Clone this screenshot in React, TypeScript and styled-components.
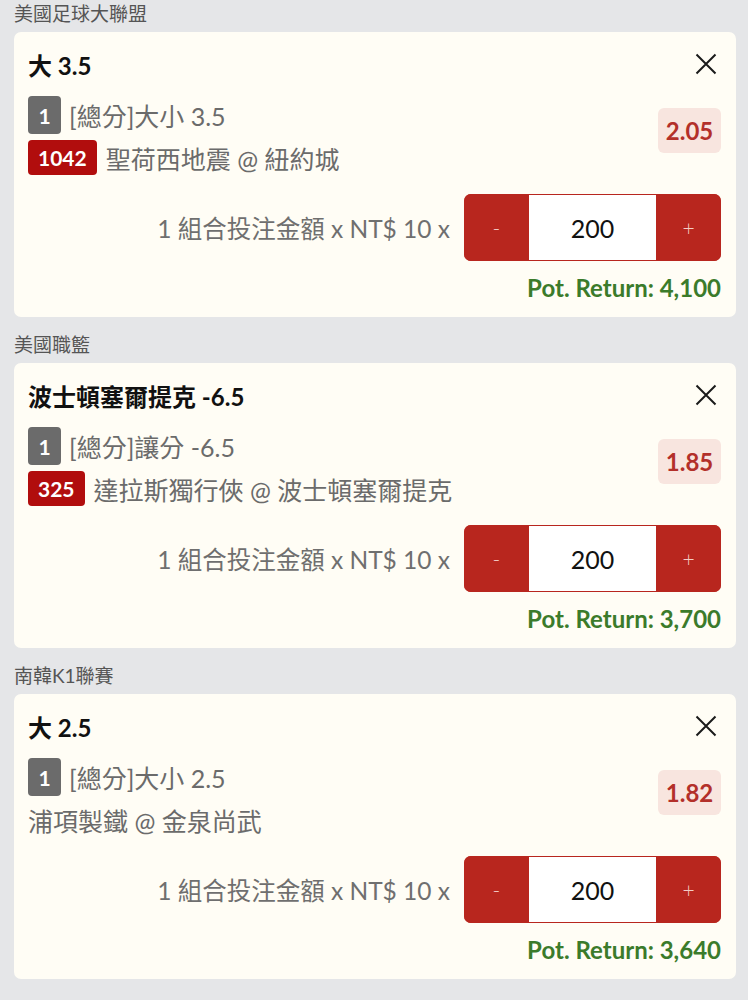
import styled, { createGlobalStyle } from 'styled-components';

const GlobalStyle = createGlobalStyle`
  html, body {
    margin: 0;
    padding: 0;
    background: #e5e6e8;
  }
  body {
    font-family: Lato, "Noto Sans CJK TC", sans-serif;
  }
`

const Page = styled.div`
  width: 748px;
  padding: 0 12px 0 14px;
  box-sizing: border-box;
`

const Section = styled.section`
  margin-bottom: 14px;
`

const League = styled.div`
  font-size: 19px;
  line-height: 28px;
  color: #555555;
  margin-bottom: 4px;
`

const Card = styled.div`
  background: #fffdf5;
  border-radius: 7px;
  height: 285px;
  box-sizing: border-box;
  padding: 16px 15px 14px 14px;
  display: flex;
  flex-direction: column;
`

const TitleRow = styled.div`
  display: flex;
  align-items: center;
  justify-content: space-between;
  height: 32px;
`

const Title = styled.div`
  font-size: 24px;
  font-weight: 700;
  color: #111111;
`

const CloseBtn = styled.button`
  background: none;
  border: none;
  padding: 0;
  margin-right: 4px;
  width: 22px;
  height: 22px;
  display: flex;
  align-items: center;
  justify-content: center;
  cursor: pointer;
`

const InfoRow = styled.div`
  display: flex;
  align-items: flex-start;
  justify-content: space-between;
  margin-top: 16px;
`

const Lines = styled.div`
  display: flex;
  flex-direction: column;
  gap: 6px;
`

const Line = styled.div<{ $h: number }>`
  display: flex;
  align-items: center;
  gap: 8px;
  height: ${({ $h }) => $h}px;
  font-size: 25px;
  color: #6b6b6b;
`

const Badge = styled.span<{ $red?: boolean }>`
  display: inline-flex;
  align-items: center;
  justify-content: center;
  box-sizing: border-box;
  min-width: ${({ $red }) => ($red ? '0' : '33px')};
  height: 100%;
  padding: 0 ${({ $red }) => ($red ? '10px' : '0')};
  margin-right: ${({ $red }) => ($red ? '1px' : '0')};
  border-radius: 4px;
  background: ${({ $red }) => ($red ? '#b10d0d' : '#6b6b6b')};
  color: #ffffff;
  font-size: 21px;
  font-weight: 700;
`

const Odds = styled.div`
  margin-top: 12px;
  width: 63px;
  height: 45px;
  border-radius: 6px;
  background: #f8e5df;
  color: #b3302a;
  font-size: 24px;
  font-weight: 700;
  display: flex;
  align-items: center;
  justify-content: center;
`

const StakeRow = styled.div`
  margin-top: auto;
  display: flex;
  align-items: center;
  justify-content: flex-end;
  gap: 14px;
`

const StakeLabel = styled.div`
  font-size: 24.5px;
  color: #6f6f6f;
`

const Stepper = styled.div`
  display: flex;
  width: 257px;
  height: 67px;
  border-radius: 7px;
  overflow: hidden;
  background: #b8261e;
`

const StepBtn = styled.button`
  width: 65px;
  border: none;
  background: #b8261e;
  color: rgba(255, 235, 230, 0.85);
  font-family: Lato, sans-serif;
  font-size: 21px;
  font-weight: 300;
  padding: 0;
`

const Amount = styled.div`
  flex: 1;
  margin: 1px 0;
  background: #ffffff;
  color: #111111;
  font-size: 25px;
  display: flex;
  align-items: center;
  justify-content: center;
`

const PotReturn = styled.div`
  margin-top: 12px;
  text-align: right;
  font-size: 24px;
  line-height: 30px;
  font-weight: 700;
  color: #3b7b2b;
`

type Bet = {
  league: string
  title: string
  market: string
  code?: string
  match: string
  odds: string
  ret: string
}

const bets: Bet[] = [
  { league: '美國足球大聯盟', title: '大 3.5', market: '[總分]大小 3.5', code: '1042', match: '聖荷西地震 @ 紐約城', odds: '2.05', ret: '4,100' },
  { league: '美國職籃', title: '波士頓塞爾提克 -6.5', market: '[總分]讓分 -6.5', code: '325', match: '達拉斯獨行俠 @ 波士頓塞爾提克', odds: '1.85', ret: '3,700' },
  { league: '南韓K1聯賽', title: '大 2.5', market: '[總分]大小 2.5', match: '浦項製鐵 @ 金泉尚武', odds: '1.82', ret: '3,640' },
]

export default function App() {
  return (
    <Page>
      <GlobalStyle />
      {bets.map((b) => (
        <Section key={b.league}>
          <League>{b.league}</League>
          <Card>
            <TitleRow>
              <Title>{b.title}</Title>
              <CloseBtn aria-label="remove">
                <svg width="22" height="22" viewBox="0 0 22 22">
                  <path d="M1.5 1.5 L20.5 20.5 M20.5 1.5 L1.5 20.5" stroke="#1a1a1a" strokeWidth="2" />
                </svg>
              </CloseBtn>
            </TitleRow>
            <InfoRow>
              <Lines>
                <Line $h={38}>
                  <Badge>1</Badge>
                  {b.market}
                </Line>
                <Line $h={35}>
                  {b.code && <Badge $red>{b.code}</Badge>}
                  {b.match}
                </Line>
              </Lines>
              <Odds>{b.odds}</Odds>
            </InfoRow>
            <StakeRow>
              <StakeLabel>1 組合投注金額 x NT$ 10 x</StakeLabel>
              <Stepper>
                <StepBtn>-</StepBtn>
                <Amount>200</Amount>
                <StepBtn>+</StepBtn>
              </Stepper>
            </StakeRow>
            <PotReturn>Pot. Return: {b.ret}</PotReturn>
          </Card>
        </Section>
      ))}
    </Page>
  )
}
